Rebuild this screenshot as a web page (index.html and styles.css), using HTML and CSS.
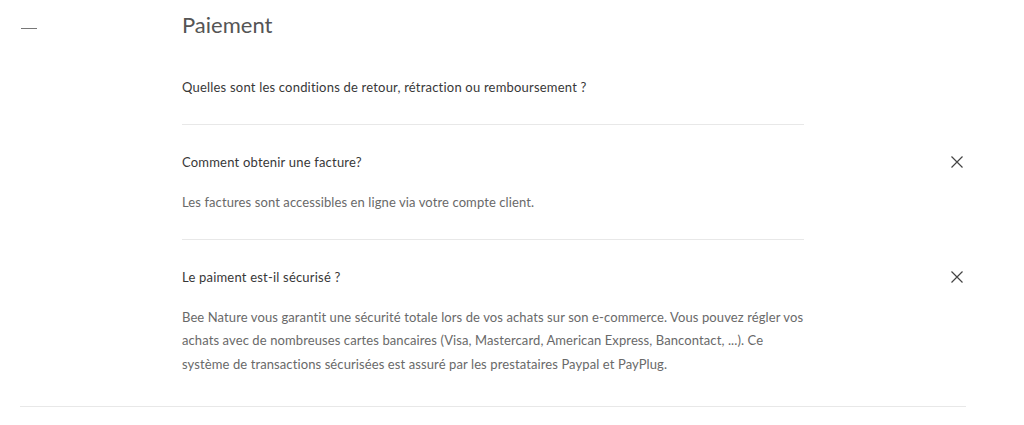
FILE: index.html
```html
<!DOCTYPE html>
<html lang="fr">
<head>
    <meta charset="UTF-8">
    <meta name="viewport" content="width=device-width, initial-scale=1.0">
    <title>FAQ - Paiement</title>
    <link rel="stylesheet" href="styles.css">
</head>
<body>
    <section class="faq-group">
        <div class="faq-toggle"><span class="dash"></span></div>
        <div class="faq-body">
            <h2>Paiement</h2>
            <div class="faq-item first">
                <div class="faq-question">
                    <p>Quelles sont les conditions de retour, rétraction ou remboursement ?</p>
                </div>
            </div>
            <div class="faq-item open">
                <div class="faq-question">
                    <p>Comment obtenir une facture?</p>
                    <svg class="close" width="12" height="12" viewBox="0 0 12 12"><path d="M0.5 0.5 L11.5 11.5 M11.5 0.5 L0.5 11.5" stroke="#444" stroke-width="1.2" fill="none"/></svg>
                </div>
                <div class="faq-answer">
                    <p>Les factures sont accessibles en ligne via votre compte client.</p>
                </div>
            </div>
            <div class="faq-item open last">
                <div class="faq-question">
                    <p>Le paiment est-il sécurisé ?</p>
                    <svg class="close" width="12" height="12" viewBox="0 0 12 12"><path d="M0.5 0.5 L11.5 11.5 M11.5 0.5 L0.5 11.5" stroke="#444" stroke-width="1.2" fill="none"/></svg>
                </div>
                <div class="faq-answer">
                    <p>Bee Nature vous garantit une sécurité totale lors de vos achats sur son e-commerce. Vous pouvez régler vos achats avec de nombreuses cartes bancaires (Visa, Mastercard, American Express, Bancontact, ...). Ce système de transactions sécurisées est assuré par les prestataires Paypal et PayPlug.</p>
                </div>
            </div>
        </div>
    </section>
</body>
</html>
```

FILE: styles.css
```css
body {
    margin: 0;
    background: #fff;
    font-family: "Lato", "Liberation Sans", sans-serif;
    color: #333;
}
.faq-group {
    display: flex;
    width: 946px;
    margin-left: 20px;
    border-bottom: 1px solid #e8e8e8;
}
.faq-toggle {
    width: 162px;
    flex-shrink: 0;
    padding-top: 28px;
}
.faq-toggle .dash {
    display: block;
    width: 16px;
    height: 1px;
    margin-left: 1px;
    background: #777;
}
.faq-body {
    flex: 1;
}
.faq-body h2 {
    margin: 10px 0 0;
    font-size: 22px;
    font-weight: 400;
    color: #555;
    line-height: 30px;
}
.faq-item {
    width: 622px;
    border-bottom: 1px solid #e8e8e8;
}
.faq-item.last {
    border-bottom: none;
    padding-bottom: 6px;
}
.faq-question {
    position: relative;
    padding: 27px 0;
}
.faq-item.first .faq-question {
    padding-top: 37px;
}
.faq-question p {
    margin: 0;
    font-size: 13px;
    line-height: 20px;
    letter-spacing: 0.2px;
    color: #383838;
}
.faq-item.open .faq-question {
    padding-bottom: 19px;
}
.close {
    position: absolute;
    right: -159px;
    top: 31px;
}
.faq-answer {
    padding-bottom: 24px;
}
.faq-answer p {
    margin: 0;
    font-size: 13px;
    line-height: 23.5px;
    letter-spacing: 0.1px;
    color: #696969;
}
```
